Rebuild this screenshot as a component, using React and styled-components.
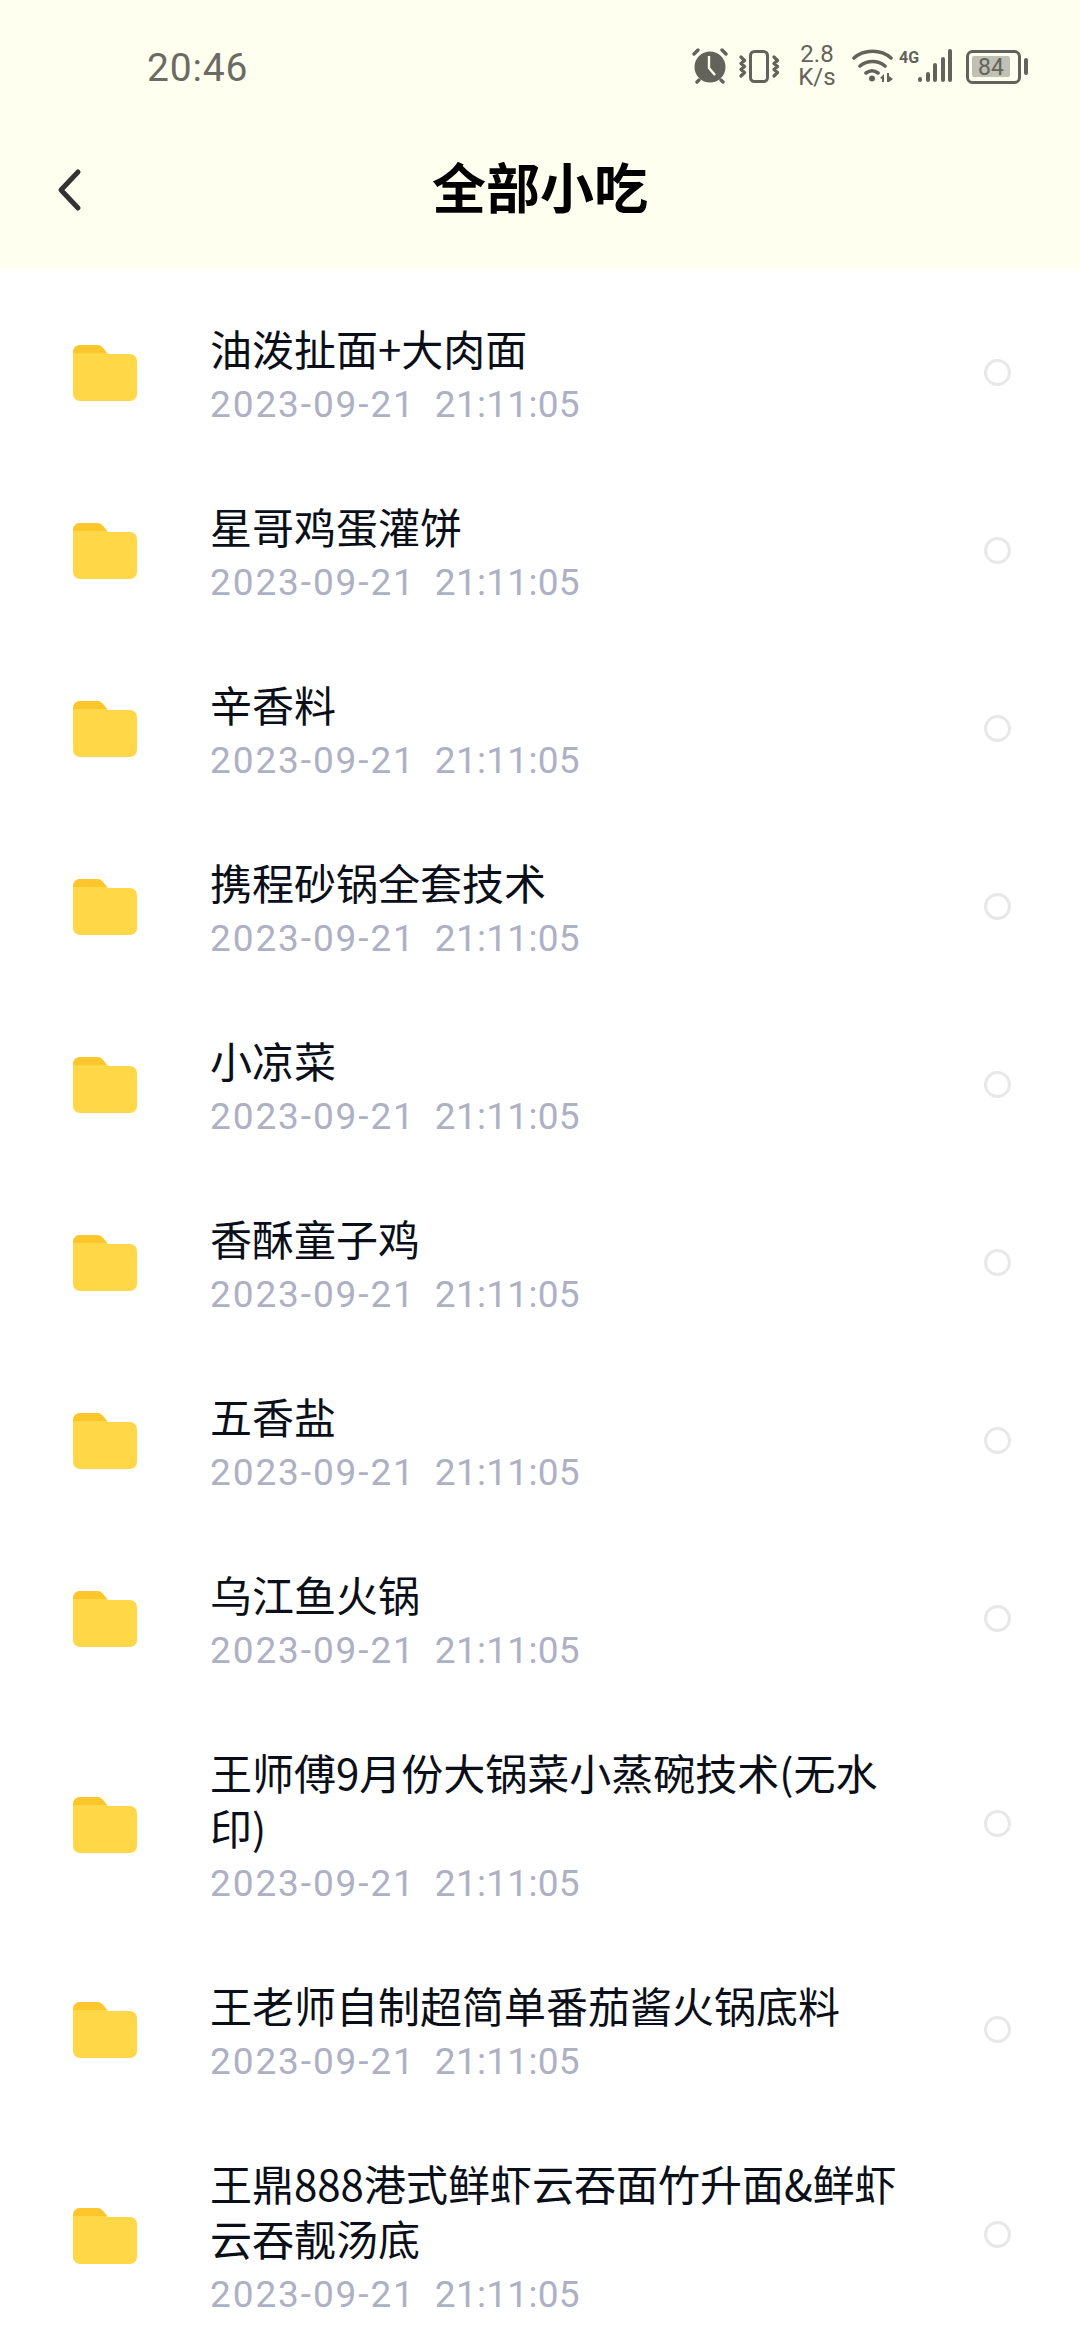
import React from "react";
import styled, { createGlobalStyle } from "styled-components";

const Global = createGlobalStyle`
  html, body { margin: 0; padding: 0; background: #fff; }
  body { font-family: "Roboto", "Noto Sans CJK SC", sans-serif; }
`;

const Page = styled.div`
  width: 1080px;
  height: 2340px;
  overflow: hidden;
  background: #fff;
`;

const Header = styled.header`
  height: 270px;
  background: #fffff0;
  display: flex;
  flex-direction: column;
`;

const StatusBar = styled.div`
  height: 136px;
  padding: 0 51px 4px 147px;
  box-sizing: border-box;
  display: flex;
  align-items: center;
  justify-content: space-between;
  color: #63635b;
`;

const Time = styled.span`
  margin-top: 3px;
  font-size: 39px;
  font-family: "Roboto", sans-serif;
  color: #6b6b64;
  letter-spacing: 0.8px;
`;

const StatusIcons = styled.div`
  display: flex;
  align-items: center;
`;

const StatusIcon = styled.svg`
  display: block;
  flex: none;
  margin-left: ${(p) => p.$gap || 0}px;
`;

const Speed = styled.div`
  width: 40px;
  margin: 0 15px 0 16px;
  font-size: 24px;
  line-height: 23px;
  text-align: center;
  font-family: "Roboto", sans-serif;
  color: #63635b;
`;

const TitleBar = styled.div`
  flex: 1;
  padding: 0 0 26px 56px;
  display: flex;
  align-items: center;
  position: relative;
`;

const BackIcon = styled.svg`
  width: 28px;
  height: 44px;
  display: block;
`;

const Title = styled.h1`
  position: absolute;
  left: 0;
  right: 0;
  top: 0;
  margin: 0;
  text-align: center;
  font-size: 54px;
  line-height: 100px;
  font-weight: 700;
  color: #000;
  font-family: "Noto Sans CJK SC", sans-serif;
`;

const List = styled.ul`
  list-style: none;
  margin: 0;
  padding: 12px 0 0;
`;

const Row = styled.li`
  display: flex;
  align-items: center;
  padding: 31px 69px 30px 73px;
  box-sizing: border-box;
`;

const FolderIcon = styled.svg`
  width: 64px;
  height: 56px;
  flex: none;
  margin: 3px 73px 0 0;
  display: block;
`;

const Info = styled.div`
  flex: 1;
  min-width: 0;
  padding: 7px 64px 0 0;
`;

const Name = styled.div`
  font-size: 42px;
  line-height: 55px;
  color: #0b0f19;
  font-family: "Noto Sans CJK SC", sans-serif;
`;

const DateLine = styled.div`
  margin-top: 5px;
  display: flex;
  gap: 19px;
  font-size: 37px;
  line-height: 50px;
  color: #aeb0c4;
  white-space: pre;
  font-family: "Roboto", sans-serif;
`;

const Stamp = styled.span`
  letter-spacing: ${(p) => p.$spacing}px;
`;

const Radio = styled.span`
  width: 27px;
  height: 27px;
  flex: none;
  margin-top: 1px;
  box-sizing: border-box;
  border: 3px solid #e8e8e8;
  border-radius: 50%;
`;

const c = "#63635b";

const Alarm = () => (
  <StatusIcon width="38" height="36" viewBox="0 0 38 36">
    <circle cx="19" cy="19" r="15.5" fill={c} />
    <path d="M18 8v12l6 7" fill="none" stroke="#fffff0" strokeWidth="2.4" />
    <path d="M3 6l4-4M35 6l-4-4M8 32l-2 2M30 32l2 2" stroke={c} strokeWidth="3.4" strokeLinecap="round" />
  </StatusIcon>
);

const Vibrate = () => (
  <StatusIcon $gap={10} width="42" height="36" viewBox="0 0 42 36">
    <rect x="11.5" y="3.5" width="17" height="30" rx="4" fill="none" stroke={c} strokeWidth="3" />
    <path d="M2 9l3.5 3.5-3.5 3 3.5 3-3.5 3 3.5 3-3.5 3.5M35 9l3.5 3.5-3.5 3 3.5 3-3.5 3 3.5 3-3.5 3.5" fill="none" stroke={c} strokeWidth="3.2" strokeLinejoin="round" strokeLinecap="round" />
  </StatusIcon>
);

const Wifi = () => (
  <StatusIcon width="44" height="36" viewBox="0 0 44 36">
    <path d="M2 10C12 1 29 1 39 10M8 18c7-6 18-6 25 0M14 25c4-3 8-3 12 0" fill="none" stroke={c} strokeWidth="3.6" strokeLinecap="round" />
    <circle cx="20" cy="30.5" r="3" fill={c} />
    <path d="M28 30l4-4v8h-2v-3zM35 25h2v3l4 3-4 3h-2z" fill={c} />
  </StatusIcon>
);

const Signal = () => (
  <StatusIcon $gap={3} width="54" height="36" viewBox="0 0 54 36">
    <text x="0" y="15" fontSize="16" fontWeight="700" fontFamily="Roboto, sans-serif" fill={c}>4G</text>
    <path d="M21 31v1M29 26v6M36 17v15M44 11v21M51 3v29" stroke={c} strokeWidth="4" strokeLinecap="round" />
  </StatusIcon>
);

const Battery = () => (
  <StatusIcon $gap={11} width="65" height="36" viewBox="0 0 65 36">
    <rect x="3.5" y="3.5" width="52" height="31" rx="5" fill="none" stroke={c} strokeWidth="3" />
    <rect x="8" y="8" width="38" height="21" rx="2" fill="#c0c0b5" />
    <text x="27" y="27" textAnchor="middle" fontSize="23" fontFamily="Roboto, sans-serif" fill={c}>84</text>
    <rect x="60" y="10" width="4" height="17" rx="2" fill={c} />
  </StatusIcon>
);

const Folder = () => (
  <FolderIcon viewBox="0 0 64 56">
    <path d="M0 7a7 7 0 0 1 7-7h17a8 8 0 0 1 6 3l5 6h22a7 7 0 0 1 7 7v33a7 7 0 0 1-7 7H7a7 7 0 0 1-7-7z" fill="#ffd747" />
    <path d="M0 8V7a7 7 0 0 1 7-7h17a8 8 0 0 1 6 3l4 5z" fill="#fdc62c" />
  </FolderIcon>
);

const names = [
  "油泼扯面+大肉面",
  "星哥鸡蛋灌饼",
  "辛香料",
  "携程砂锅全套技术",
  "小凉菜",
  "香酥童子鸡",
  "五香盐",
  "乌江鱼火锅",
  "王师傅9月份大锅菜小蒸碗技术(无水印)",
  "王老师自制超简单番茄酱火锅底料",
  "王鼎888港式鲜虾云吞面竹升面&鲜虾云吞靓汤底",
];

export default function App() {
  return (
    <Page>
      <Global />
      <Header>
        <StatusBar>
          <Time>20:46</Time>
          <StatusIcons>
            <Alarm />
            <Vibrate />
            <Speed>2.8<br />K/s</Speed>
            <Wifi />
            <Signal />
            <Battery />
          </StatusIcons>
        </StatusBar>
        <TitleBar>
          <BackIcon viewBox="0 0 28 44">
            <path d="M22 4L5 22l17 18" fill="none" stroke="#333" strokeWidth="5" strokeLinecap="round" strokeLinejoin="round" />
          </BackIcon>
          <Title>全部小吃</Title>
        </TitleBar>
      </Header>
      <List>
        {names.map((n) => (
          <Row key={n}>
            <Folder />
            <Info>
              <Name>{n}</Name>
              <DateLine>
                <Stamp $spacing={1.9}>2023-09-21</Stamp>
                <Stamp $spacing={0.3}>21:11:05</Stamp>
              </DateLine>
            </Info>
            <Radio />
          </Row>
        ))}
      </List>
    </Page>
  );
}
